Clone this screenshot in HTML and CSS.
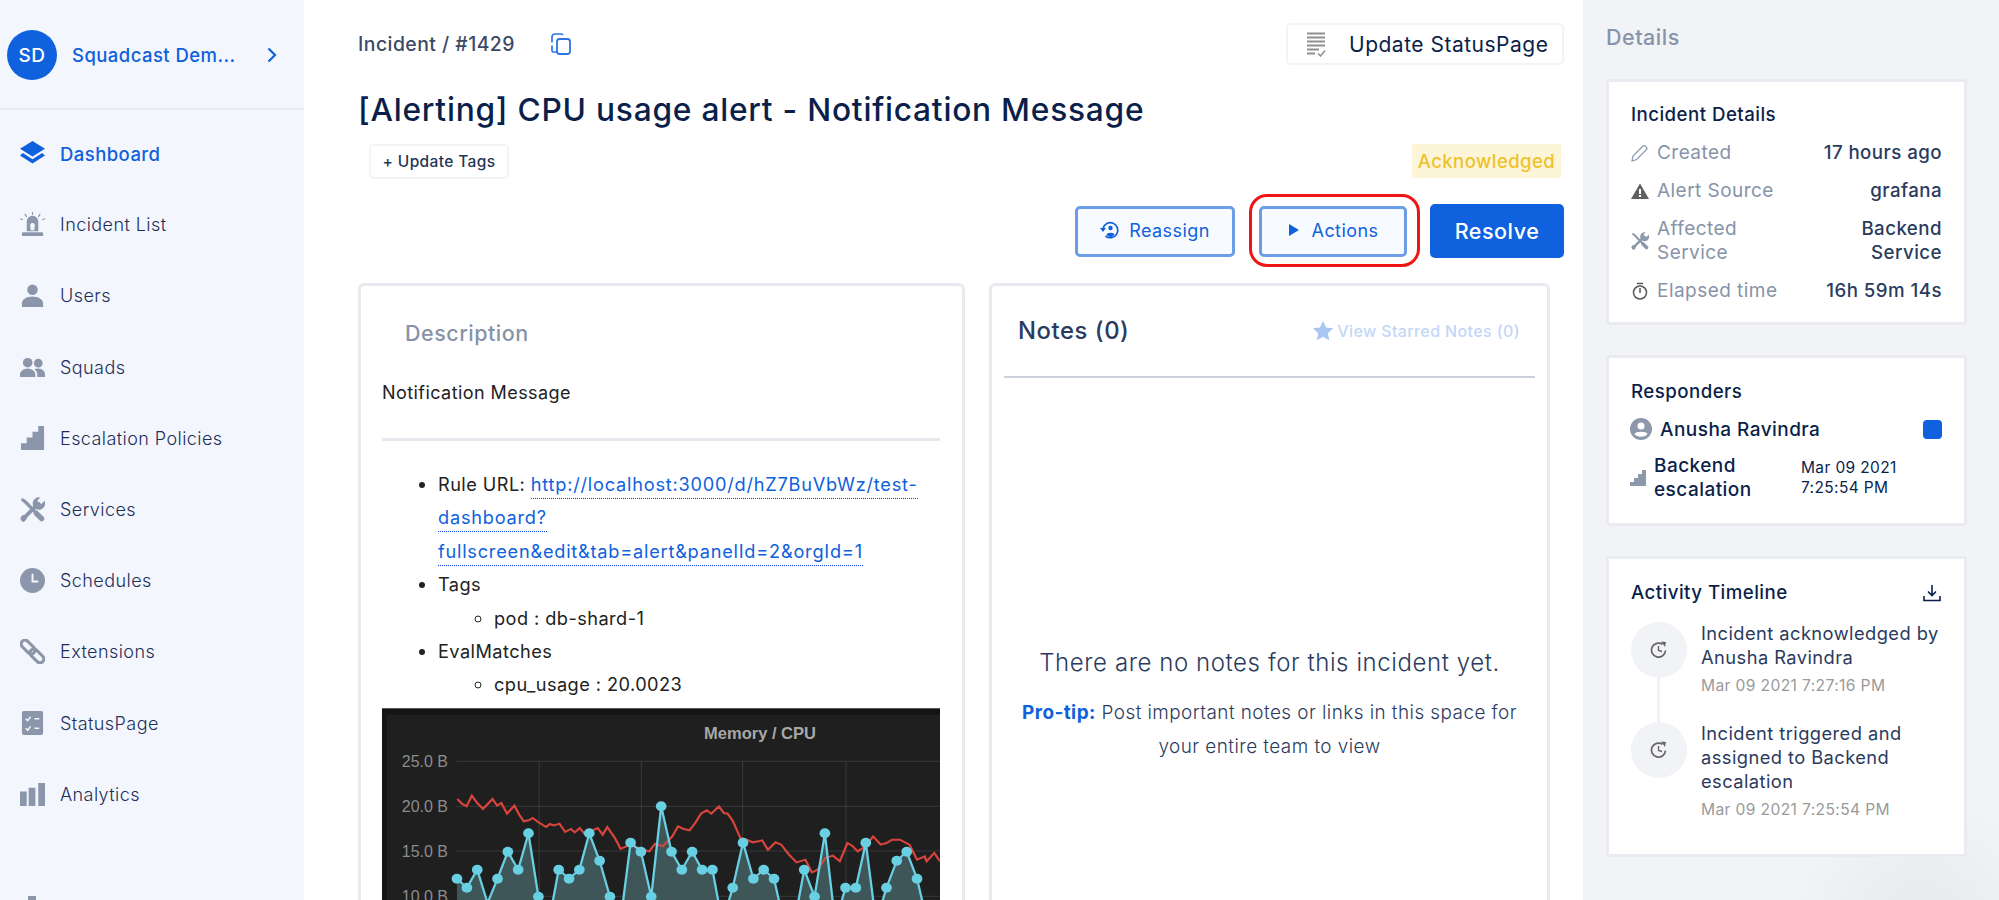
FILE: index.html
```html
<!DOCTYPE html>
<html lang="en">
<head>
<meta charset="utf-8">
<title>Incident #1429</title>
<link rel="stylesheet" href="styles.css">
</head>
<body>
<aside class="sidebar">
  <div class="org">
    <div class="avatar">SD</div>
    <div class="org-name">Squadcast Dem...</div>
    <svg class="chev" viewBox="0 0 10 16"><path d="M1.500 1.500 8 8l-6.500 6.500" fill="none" stroke="currentColor" stroke-width="2.200"/></svg>
  </div>
  <nav class="nav">
    <a class="item active"><svg viewBox="0 0 26 26"><path d="M13 0 26 8 13 16 0 8zM3 12.500l-3 2.500 13 8.500L26 15l-3-2.500-10 6.500z"/></svg><span>Dashboard</span></a>
    <a class="item"><svg viewBox="0 0 26 26"><path d="M7 10a6 6 0 0 1 12 0v10H7zM3 21h20a1 1 0 0 1 1 1v3H2v-3a1 1 0 0 1 1-1z"/><circle cx="13" cy="14" r="2.500" fill="#f3f6fc"/><rect x="11" y="14" width="4" height="5" fill="#f3f6fc"/><path d="M13 0v3M5 2l2 3M21 2l-2 3M0 7l3 1M26 7l-3 1" stroke="#8b96ab" stroke-width="1.200"/></svg><span>Incident List</span></a>
    <a class="item"><svg viewBox="0 0 26 26"><circle cx="13" cy="7" r="5.500"/><path d="M2 25v-4c0-4 5-7 11-7s11 3 11 7v4z"/></svg><span>Users</span></a>
    <a class="item"><svg viewBox="0 0 26 26"><circle cx="8" cy="8" r="5"/><circle cx="19" cy="8.500" r="4.500"/><path d="M0 23v-3c0-3 4-6 8-6s8 3 8 6v3zM18 23v-3c0-2-1-4-3-5 1-.6 3-1 4-1 4 0 7 3 7 6v3z"/></svg><span>Squads</span></a>
    <a class="item"><svg viewBox="0 0 26 26"><path d="M1 25v-7h6v-6h6V6h6V0h6v25z"/></svg><span>Escalation Policies</span></a>
    <a class="item"><svg viewBox="0 0 26 26"><g fill="none" stroke="#8b96ab" stroke-linecap="round"><path d="M4 22 19 7" stroke-width="4"/><path d="M3 3l3 2.500L21 21" stroke-width="3.400"/><path d="M17 17l5.500 5.500" stroke-width="5.500"/></g><path d="M25.500 4a6.500 6.500 0 1 1-4.500-3.500l-3 3.500 1.500 2.500 3 .5zM.5 22a4.500 4.500 0 0 1 5.500-3l1 4-3 3a4.500 4.500 0 0 1-3.500-4z"/></svg><span>Services</span></a>
    <a class="item"><svg viewBox="0 0 26 26"><circle cx="13" cy="13" r="13"/><path d="M13 6v8h6" fill="none" stroke="#f3f6fc" stroke-width="2"/></svg><span>Schedules</span></a>
    <a class="item"><svg viewBox="0 0 26 26"><g transform="rotate(45 13 13)" fill="none" stroke="#8b96ab" stroke-width="3.200"><rect x="-2" y="9" width="17" height="8" rx="4"/><rect x="11" y="9" width="17" height="8" rx="4"/></g></svg><span>Extensions</span></a>
    <a class="item"><svg viewBox="0 0 26 26"><rect x="2" y="0" width="22" height="25" rx="2"/><path d="M6 8l2 2 3-4M6 18l2 2 3-4M15 8h5M15 18h5" fill="none" stroke="#f3f6fc" stroke-width="1.600"/></svg><span>StatusPage</span></a>
    <a class="item"><svg viewBox="0 0 26 26"><path d="M0 10h7v15H0zM9 6h7v19H9zM19 1h7v24h-7z"/></svg><span>Analytics</span></a>
    <div class="nav-stub"></div>
  </nav>
</aside>

<main class="main">
  <div class="crumb-row">
    <div class="crumb">
      <span>Incident / #1429</span>
      <svg class="copy" viewBox="0 0 21 22"><path d="M7 19H3a2 2 0 0 1-1-1V4a3 3 0 0 1 3-3h6a2 2 0 0 1 2 1" fill="none" stroke="#2d74e6" stroke-width="1.700" stroke-dasharray="11 3 30"/><rect x="7" y="6" width="13" height="15" rx="2.500" fill="none" stroke="#2d74e6" stroke-width="1.800"/></svg>
    </div>
    <button class="status-btn">
      <svg viewBox="0 0 20 24"><path d="M1 1h18M1 5h18M1 9h18M1 13h18M1 17h12M1 21h8" stroke="#8f8f8f" stroke-width="2"/><path d="M12 21l2.500 2.500L19 18" fill="none" stroke="#8f8f8f" stroke-width="1.500"/></svg>
      <span>Update StatusPage</span>
    </button>
  </div>
  <h1 class="title">[Alerting] CPU usage alert - Notification Message</h1>
  <div class="tag-row">
    <button class="tags-btn">+ Update Tags</button>
    <span class="badge">Acknowledged</span>
  </div>
  <div class="actions">
    <button class="btn">
      <svg viewBox="0 0 20 20"><path d="M3 8.500A7.500 7.500 0 1 1 5.500 16" fill="none" stroke="#0f61dd" stroke-width="1.700"/><path d="M0 8h6l-3 4z" fill="#0f61dd"/><circle cx="10.500" cy="8" r="2.200" fill="#0f61dd"/><path d="M6.500 15c0-3 8-3 8 0l-4 2.500z" fill="#0f61dd"/></svg>
      <span>Reassign</span>
    </button>
    <button class="btn btn-action">
      <svg class="play" viewBox="0 0 12 14"><path d="M1 1v12l10-6z" fill="#0f61dd"/></svg>
      <span>Actions</span>
    </button>
    <button class="resolve">Resolve</button>
  </div>
  <div class="columns">
    <section class="card desc">
      <h2 class="desc-title">Description</h2>
      <p class="desc-lead">Notification Message</p>
      <hr class="desc-rule">
      <ul class="desc-list">
        <li>Rule URL: <a class="link">http://localhost:3000/d/hZ7BuVbWz/test-</a><br><a class="link">dashboard?</a><br><a class="link">fullscreen&amp;edit&amp;tab=alert&amp;panelId=2&amp;orgId=1</a></li>
        <li>Tags
          <ul><li>pod : db-shard-1</li></ul>
        </li>
        <li>EvalMatches
          <ul><li>cpu_usage : 20.0023</li></ul>
        </li>
      </ul>
      <svg class="chart" viewBox="0 0 558 192">
        <rect width="558" height="192" fill="#1f1f20"/>
        <rect width="558" height="1" fill="#5a5a5a"/>
        <rect y="1" width="558" height="6" fill="#151515"/>
        <rect y="1" width="5" height="191" fill="#151515"/>
        <text class="chart-title" x="378" y="31" text-anchor="middle">Memory / CPU</text>
        <g class="chart-y" text-anchor="end">
          <text x="66" y="59">25.0 B</text>
          <text x="66" y="104">20.0 B</text>
          <text x="66" y="149">15.0 B</text>
          <text x="66" y="194">10.0 B</text>
        </g>
        <svg x="0" y="0" width="558" height="192" viewBox="31 55 1459 576" preserveAspectRatio="none">
          <g stroke="#454545" stroke-width="2" fill="none">
            <path d="M226 215H1490M226 350H1490M226 484H1490M226 620H1490"/>
            <path d="M442 215V640M709 215V640M974 215V640M1244 215V640"/>
          </g>
          <path fill="#3f5659" d="M227,567 253,594 280,540 307,640 333,567 360,486 387,540 414,431 440,621 467,700 493,540 520,567 547,540 573,431 600,513 627,621 654,700 681,459 708,486 735,621 761,350 788,486 815,540 842,486 868,540 895,540 921,700 948,594 975,459 1002,567 1029,540 1056,567 1082,700 1109,700 1135,540 1162,621 1189,431 1216,700 1243,594 1270,594 1296,459 1323,700 1350,594 1377,513 1403,486 1430,567 1457,700 V700 H227Z"/>
          <polyline fill="none" stroke="#d9443c" stroke-width="6" points="228,328 240,342 252,350 266,318 280,340 295,358 310,340 320,328 332,348 343,340 358,372 377,348 390,375 402,395 415,392 425,385 440,398 460,412 470,403 480,407 495,402 510,427 525,418 535,428 548,415 560,432 575,425 595,415 608,435 620,412 640,445 655,478 680,465 700,475 730,485 745,462 765,470 790,440 805,410 820,418 835,422 850,400 865,372 880,362 892,372 912,350 925,370 935,372 948,393 968,445 985,450 1000,458 1015,455 1025,452 1040,480 1060,458 1075,465 1095,495 1115,518 1138,510 1155,548 1170,540 1190,505 1210,498 1228,515 1248,460 1260,468 1275,485 1295,470 1315,440 1335,465 1350,460 1365,450 1385,450 1410,465 1430,510 1450,500 1455,515 1475,490 1490,515"/>
          <polyline fill="none" stroke="#68d0e2" stroke-width="6" points="227,567 253,594 280,540 307,640 333,567 360,486 387,540 414,431 440,621 467,700 493,540 520,567 547,540 573,431 600,513 627,621 654,700 681,459 708,486 735,621 761,350 788,486 815,540 842,486 868,540 895,540 921,700 948,594 975,459 1002,567 1029,540 1056,567 1082,700 1109,700 1135,540 1162,621 1189,431 1216,700 1243,594 1270,594 1296,459 1323,700 1350,594 1377,513 1403,486 1430,567 1457,700"/>
          <g fill="#68d0e2">
            <ellipse cx="227" cy="567" rx="14" ry="15"/><ellipse cx="253" cy="594" rx="14" ry="15"/><ellipse cx="280" cy="540" rx="14" ry="15"/><ellipse cx="333" cy="567" rx="14" ry="15"/><ellipse cx="360" cy="486" rx="14" ry="15"/><ellipse cx="387" cy="540" rx="14" ry="15"/><ellipse cx="414" cy="431" rx="14" ry="15"/><ellipse cx="440" cy="621" rx="14" ry="15"/><ellipse cx="493" cy="540" rx="14" ry="15"/><ellipse cx="520" cy="567" rx="14" ry="15"/><ellipse cx="547" cy="540" rx="14" ry="15"/><ellipse cx="573" cy="431" rx="14" ry="15"/><ellipse cx="600" cy="513" rx="14" ry="15"/><ellipse cx="627" cy="621" rx="14" ry="15"/><ellipse cx="681" cy="459" rx="14" ry="15"/><ellipse cx="708" cy="486" rx="14" ry="15"/><ellipse cx="735" cy="621" rx="14" ry="15"/><ellipse cx="761" cy="350" rx="14" ry="15"/><ellipse cx="788" cy="486" rx="14" ry="15"/><ellipse cx="815" cy="540" rx="14" ry="15"/><ellipse cx="842" cy="486" rx="14" ry="15"/><ellipse cx="868" cy="540" rx="14" ry="15"/><ellipse cx="895" cy="540" rx="14" ry="15"/><ellipse cx="948" cy="594" rx="14" ry="15"/><ellipse cx="975" cy="459" rx="14" ry="15"/><ellipse cx="1002" cy="567" rx="14" ry="15"/><ellipse cx="1029" cy="540" rx="14" ry="15"/><ellipse cx="1056" cy="567" rx="14" ry="15"/><ellipse cx="1135" cy="540" rx="14" ry="15"/><ellipse cx="1162" cy="621" rx="14" ry="15"/><ellipse cx="1189" cy="431" rx="14" ry="15"/><ellipse cx="1243" cy="594" rx="14" ry="15"/><ellipse cx="1270" cy="594" rx="14" ry="15"/><ellipse cx="1296" cy="459" rx="14" ry="15"/><ellipse cx="1350" cy="594" rx="14" ry="15"/><ellipse cx="1377" cy="513" rx="14" ry="15"/><ellipse cx="1403" cy="486" rx="14" ry="15"/><ellipse cx="1430" cy="567" rx="14" ry="15"/>
          </g>
        </svg>
      </svg>
    </section>
    <section class="card notes">
      <div class="notes-head">
        <h2 class="notes-title">Notes (0)</h2>
        <div class="starred">
          <svg viewBox="0 0 24 24"><path d="M12 1l3.300 7.200 7.700.9-5.700 5.300 1.500 7.800L12 18.300 5.200 22.200l1.500-7.800L1 9.100l7.700-.9z" fill="#a9c5f3"/></svg>
          <span>View Starred Notes (0)</span>
        </div>
      </div>
      <hr class="notes-rule">
      <div class="empty">
        <p class="empty-lead">There are no notes for this incident yet.</p>
        <p class="empty-tip"><b>Pro-tip:</b> Post important notes or links in this space for<br>your entire team to view</p>
      </div>
    </section>
  </div>
</main>

<aside class="details">
  <h2 class="details-head">Details</h2>
  <section class="panel info">
    <h3 class="panel-title">Incident Details</h3>
    <div class="row">
      <div class="key"><svg viewBox="0 0 18 18"><path d="M1 17l1-5L12 2c1.500-1.500 5 2 3.500 3.500L5.500 15.500z" fill="none" stroke="#8d98ad" stroke-width="1.200"/></svg><span>Created</span></div>
      <div class="val">17 hours ago</div>
    </div>
    <div class="row">
      <div class="key"><svg viewBox="0 0 18 18"><path d="M9 1.500 18 17H0z" fill="#5f5f5f"/><path d="M8 7h2v5H8zM8 13h2v2H8z" fill="#fff"/></svg><span>Alert Source</span></div>
      <div class="val">grafana</div>
    </div>
    <div class="row">
      <div class="key"><svg viewBox="0 0 26 26"><g fill="none" stroke="#8d98ad" stroke-linecap="round"><path d="M4 22 19 7" stroke-width="3.500"/><path d="M3 3l3 2.500L21 21" stroke-width="3"/><path d="M17 17l5.500 5.500" stroke-width="5"/></g><path fill="#8d98ad" d="M25.500 4a6.500 6.500 0 1 1-4.500-3.500l-3 3.500 1.500 2.500 3 .5zM.5 22a4.500 4.500 0 0 1 5.500-3l1 4-3 3a4.500 4.500 0 0 1-3.500-4z"/></svg><span>Affected<br>Service</span></div>
      <div class="val">Backend<br>Service</div>
    </div>
    <div class="row">
      <div class="key"><svg viewBox="0 0 18 18"><circle cx="9" cy="10.500" r="6.500" fill="none" stroke="#555" stroke-width="1.500"/><path d="M6 1.500h6M9 6v5" stroke="#555" stroke-width="1.500"/></svg><span>Elapsed time</span></div>
      <div class="val">16h 59m 14s</div>
    </div>
  </section>
  <section class="panel responders">
    <h3 class="panel-title resp-title">Responders</h3>
    <div class="resp-row">
      <svg class="resp-user" viewBox="0 0 22 22"><circle cx="11" cy="11" r="11" fill="#8d98ad"/><circle cx="11" cy="8" r="3.500" fill="#fff"/><path d="M4.500 16c1-3 12-3 13 0-2 3.500-11 3.500-13 0z" fill="#fff"/></svg>
      <span class="resp-name">Anusha Ravindra</span>
      <span class="resp-dot"></span>
    </div>
    <div class="resp-esc">
      <svg class="resp-stair" viewBox="0 0 16 16"><path d="M0 16v-4h4V8h4V4h4V0h4v16z" fill="#8d98ad"/></svg>
      <span class="esc-name">Backend<br>escalation</span>
      <span class="esc-date">Mar 09 2021<br>7:25:54 PM</span>
    </div>
  </section>
  <section class="panel timeline">
    <div class="tl-head">
      <h3 class="panel-title">Activity Timeline</h3>
      <svg class="dl" viewBox="0 0 18 18"><path d="M9 1v10M5 7.500 9 11.500 13 7.500M1 12v4.500h16V12" fill="none" stroke="#0b1f4b" stroke-width="1.600"/></svg>
    </div>
    <div class="tl-item tl-first">
      <div class="tl-dot"><svg viewBox="0 0 18 18"><path d="M15.500 9.500A7 7 0 1 1 12.500 3.300" fill="none" stroke="#666" stroke-width="1.700"/><path d="M11 .5l5 .5-1 5z" fill="#666"/><path d="M8.500 5v4.500l3.500 1" fill="none" stroke="#666" stroke-width="1.400"/></svg></div>
      <div>
        <p class="tl-text">Incident acknowledged by<br>Anusha Ravindra</p>
        <p class="tl-date">Mar 09 2021 7:27:16 PM</p>
      </div>
    </div>
    <div class="tl-item">
      <div class="tl-dot"><svg viewBox="0 0 18 18"><path d="M15.500 9.500A7 7 0 1 1 12.500 3.300" fill="none" stroke="#666" stroke-width="1.700"/><path d="M11 .5l5 .5-1 5z" fill="#666"/><path d="M8.500 5v4.500l3.500 1" fill="none" stroke="#666" stroke-width="1.400"/></svg></div>
      <div>
        <p class="tl-text">Incident triggered and<br>assigned to Backend<br>escalation</p>
        <p class="tl-date">Mar 09 2021 7:25:54 PM</p>
      </div>
    </div>
  </section>
</aside>
</body>
</html>
```
FILE: styles.css
```css
* { box-sizing: border-box; letter-spacing: .024em; }
html, body { margin: 0; height: 900px; overflow: hidden; }
body { display: flex; background: #fff; color: #0b1f4b; font-family: Inter, "Noto Sans", sans-serif; }
h1, h2, h3, p { margin: 0; font-weight: 500; }
button { font-family: inherit; cursor: pointer; }

.sidebar { width: 304px; flex: none; background: #f3f6fc; }
.org { height: 110px; display: flex; align-items: center; padding: 2px 0 0 7px; border-bottom: 2px solid #e9edf4; color: #0f61dd; }
.avatar { width: 50px; height: 50px; border-radius: 50%; background: #0f61dd; color: #fff; font-size: 19px; font-weight: 500; display: flex; align-items: center; justify-content: center; flex: none; }
.org-name { margin-left: 15px; width: 195px; font-size: 18.500px; font-weight: 500; }
.chev { width: 10px; height: 16px; }
.nav { padding-top: 8px; }
.item { height: 71.200px; display: flex; align-items: center; padding-left: 20px; font-size: 18px; font-weight: 300; color: #1d2f5a; }
.item svg { width: 25px; height: 25px; fill: #8b96ab; flex: none; margin-right: 15px; }
.item.active { color: #0f61dd; font-weight: 500; font-size: 18.500px; }
.item.active svg { fill: #0f61dd; }
.nav-stub { width: 8px; height: 10px; margin: 66px 0 0 28px; background: #8b96ab; }

.main { flex: 1; min-width: 0; padding: 23px 19px 0 54px; }
.crumb-row { display: flex; justify-content: space-between; height: 42px; }
.crumb { display: flex; align-items: center; gap: 35px; font-size: 19.400px; font-weight: 500; color: #3c4a66; }
.copy { width: 21px; height: 22px; }
.status-btn { width: 278px; display: flex; align-items: center; padding: 0 0 0 18px; background: #fff; border: 2px solid #f3f4f7; border-radius: 5px; font-size: 21px; font-weight: 400; color: #0b1f4b; }
.status-btn svg { width: 20px; height: 25px; margin-right: 23px; }
.title { margin-top: 25px; font-size: 31.700px; line-height: 40px; font-weight: 500; color: #0b1f4b; white-space: nowrap; }
.tag-row { margin-top: 14px; display: flex; justify-content: space-between; align-items: flex-start; padding: 0 3px 0 11px; }
.tags-btn { height: 35px; width: 140px; padding: 0; background: #fff; border: 2px solid #f3f4f7; border-radius: 5px; font-size: 15.500px; font-weight: 500; color: #253556; }
.badge { width: 149px; height: 34px; display: flex; align-items: center; justify-content: center; background: #fdf5d8; color: #eec22b; font-size: 18.500px; font-weight: 500; }
.actions { margin-top: 25px; height: 54px; display: flex; justify-content: flex-end; align-items: center; }
.btn { position: relative; height: 51px; display: flex; align-items: center; justify-content: center; gap: 9px; padding: 0 0 2px; background: #f7fbff; border: 3px solid #6b9de8; border-radius: 5px; color: #0f61dd; font-size: 18px; font-weight: 400; width: 160px; }
.btn svg { width: 20px; height: 20px; }
.btn .play { width: 12px; height: 14px; margin-right: 3px; }
.btn-action { width: 148px; margin-left: 24px; }
.btn-action::after { content: ""; position: absolute; inset: -15px -16px -13px -13px; border: 3px solid #f01414; border-radius: 18px; pointer-events: none; }
.resolve { width: 134px; height: 54px; margin-left: 23px; background: #0f61dd; border: 0; border-radius: 5px; color: #fff; font-size: 21.500px; font-weight: 500; }

.columns { margin-top: 25px; padding-right: 14px; display: flex; gap: 24px; }
.card { height: 660px; background: #fff; border: 3px solid #e8eaef; border-radius: 6px; overflow: hidden; }
.desc { width: 607px; flex: none; padding: 35px 22px 0 21px; }
.desc-title { margin-left: 23px; font-size: 21.500px; line-height: 24px; color: #8793a9; }
.desc-lead { margin-top: 31px; font-size: 18px; line-height: 34px; font-weight: 400; color: #222; }
.desc-rule { margin: 28px 0 0; height: 3px; border: 0; background: #e8e9ee; }
.desc-list { margin: 27px 0 0; padding: 0 0 0 56px; font-size: 18.200px; line-height: 33.400px; color: #222; white-space: nowrap; }
.desc-list ul { margin: 0; padding-left: 56px; list-style: circle; }
.link { color: #0f61dd; border-bottom: 1px dotted #0f3fdd; padding-bottom: 3px; letter-spacing: .042em; }
.chart { display: block; width: 558px; height: 192px; margin-top: 6px; }
.chart-title { font: bold 16.500px "Liberation Sans", sans-serif; fill: #a8a8a8; letter-spacing: 0; }
.chart-y text { font: 16px "Liberation Sans", sans-serif; fill: #8c8c8c; letter-spacing: 0; }

.notes { flex: 1; min-width: 0; padding: 0 12px; }
.notes-head { height: 90px; padding: 25px 15px 0 14px; display: flex; justify-content: space-between; align-items: flex-start; }
.notes-title { font-size: 23.800px; line-height: 40px; color: #2a3b5e; }
.starred { margin-top: 5px; height: 30px; display: flex; align-items: center; gap: 3px; font-size: 16px; font-weight: 500; color: #c3d6f6; }
.starred svg { width: 22px; height: 22px; }
.notes-rule { margin: 0; height: 2px; border: 0; background: #cbd0da; }
.empty { margin-top: 267px; text-align: center; color: #2a3b5e; }
.empty-lead { font-size: 24px; line-height: 36px; font-weight: 300; }
.empty-tip { margin-top: 15px; font-size: 18.900px; line-height: 33.500px; font-weight: 300; }
.empty-tip b { color: #0f61dd; font-weight: 700; }

.details { width: 416px; flex: none; padding: 0 32px 0 23px; background: #f2f3f6 radial-gradient(circle 130px at 340px 930px, #e7e8ec, #f2f3f6); }
.details-head { height: 79px; padding-top: 25px; font-size: 21.500px; line-height: 24px; color: #8793a9; }
.panel { background: #fff; border: 3px solid #e9ebf0; border-radius: 3px; padding: 0 22px; }
.panel-title { font-size: 18.700px; line-height: 24px; font-weight: 500; color: #0b1f4b; }
.info { height: 246px; padding-top: 21px; }
.row { margin-top: 14px; display: flex; justify-content: space-between; align-items: center; line-height: 24px; }
.key { display: flex; align-items: center; gap: 8px; color: #8793a9; font-size: 19px; font-weight: 400; white-space: nowrap; }
.key svg { width: 18px; height: 18px; flex: none; }
.val { text-align: right; font-size: 18.700px; font-weight: 500; color: #2a3b5e; white-space: nowrap; }
.responders { margin-top: 30px; height: 171px; padding-top: 22px; }
.resp-row { margin-top: 12px; display: flex; align-items: center; height: 26px; font-size: 19px; font-weight: 500; }
.resp-user { width: 22px; height: 22px; margin-left: -1px; margin-right: 8px; flex: none; }
.resp-name { flex: 1; }
.resp-dot { width: 19px; height: 19px; background: #0f61dd; border-radius: 4px; }
.resp-esc { margin-top: 12px; display: flex; align-items: center; font-size: 19px; line-height: 24px; font-weight: 500; }
.resp-stair { width: 16px; height: 16px; margin-left: -1px; margin-right: 8px; flex: none; }
.esc-name { width: 147px; flex: none; }
.esc-date { font-size: 15.500px; line-height: 20px; font-weight: 400; }
.timeline { margin-top: 30px; height: 301px; padding-top: 22px; }
.tl-head { display: flex; justify-content: space-between; align-items: center; padding-right: 1px; }
.dl { width: 18px; height: 18px; }
.tl-item { display: flex; gap: 14px; position: relative; }
.tl-first { margin-top: 16px; height: 100px; }
.tl-first::after { content: ""; position: absolute; left: 26px; top: 56px; width: 3px; height: 45px; background: #f2f3f6; }
.tl-dot { width: 56px; height: 56px; margin-top: 1px; border-radius: 50%; background: #f2f3f6; display: flex; align-items: center; justify-content: center; flex: none; }
.tl-dot svg { width: 18px; height: 18px; }
.tl-text { font-size: 18.300px; line-height: 24px; font-weight: 400; color: #2a3b5e; white-space: nowrap; }
.tl-date { margin-top: 7px; font-size: 15.600px; line-height: 20px; font-weight: 400; color: #9a9a9a; white-space: nowrap; }
```
